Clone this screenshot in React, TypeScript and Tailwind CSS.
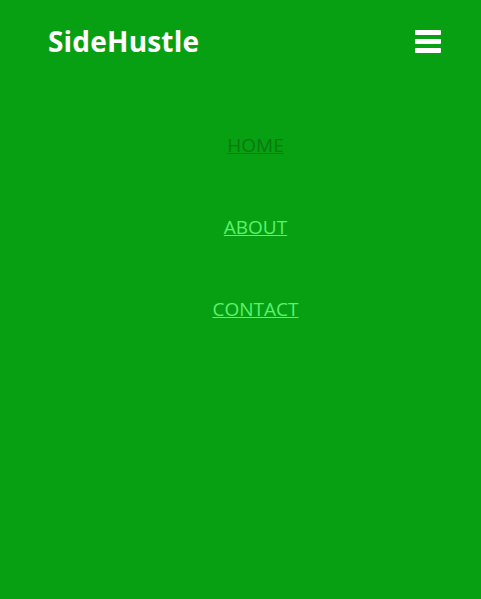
import React from 'react';

const links = [
  { label: 'HOME', active: true },
  { label: 'ABOUT', active: false },
  { label: 'CONTACT', active: false },
];

export default function App() {
  return (
    <div className="min-h-[599px] w-full bg-[#07a012] font-['Open_Sans','Noto_Sans',sans-serif]">
      {/* Top bar */}
      <header className="flex items-center justify-between pl-12 pr-10 pt-[22px]">
        <h1 className="text-[28px] font-bold leading-[38px] tracking-[0.2px] text-white">SideHustle</h1>
        <button className="flex h-[23px] w-[26px] flex-col justify-between" aria-label="Menu">
          <span className="block h-[5px] w-full rounded-[1px] bg-white"></span>
          <span className="block h-[5px] w-full rounded-[1px] bg-white"></span>
          <span className="block h-[5px] w-full rounded-[1px] bg-white"></span>
        </button>
      </header>

      {/* Nav */}
      <nav className="mt-[71px] flex flex-col items-center gap-[54px] pl-[30px]">
        {links.map((l) => (
          <a
            key={l.label}
            href="#"
            className={
              'text-[19px] leading-[28px] underline ' +
              (l.active ? 'text-[#077a10]' : 'text-[#5cf26e]')
            }
          >
            {l.label}
          </a>
        ))}
      </nav>
    </div>
  );
}
